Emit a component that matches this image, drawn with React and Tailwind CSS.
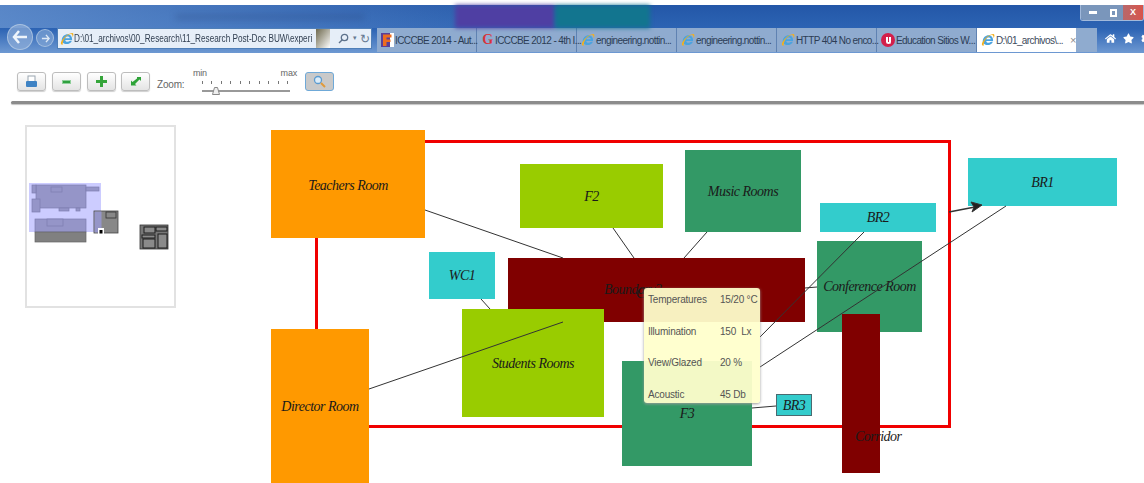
import React from "react";
import { FaHome, FaStar, FaCog } from "react-icons/fa";

const IeIcon = () => (
  <svg width="14" height="14" viewBox="0 0 16 16" className="shrink-0">
    <path d="M2 9.500C2 5 5.500 2.500 8.500 2.500c3.500 0 5.500 2.600 5.300 6.500H6c.2 2.400 3.600 3 5.400.9h2.200c-1.500 4.200-7.500 5-10.200 2.500C2.300 11.500 2 10.600 2 9.500zM6 7h5.200C11 4.400 6.400 4.400 6 7z" fill="#4aa3e0" />
    <path d="M1 13.500C.5 9.500 8 1.500 14 1.200c1.500 0 1.800 2 .6 4.800-.2-2-.7-3.500-2-3.600C8.500 2.300 3 8.500 3 14.500c-.8.200-1.700-.2-2-1z" fill="#f2b01e" />
  </svg>
);

const FavF = () => (
  <svg width="13" height="14" viewBox="0 0 13 14" className="shrink-0">
    <rect width="13" height="14" fill="#fff" />
    <rect width="9" height="14" fill="#5b3f98" />
    <path d="M2 1.500h8.500v3H5.500v2h4v2.500h-4v4H2z" fill="#ee6c1f" />
  </svg>
);

const FavG = () => (
  <span className="w-[13px] shrink-0 text-center font-['Liberation_Serif',serif] text-[14px] leading-none font-bold text-[#d8343c]">
    G
  </span>
);

const FavEdu = () => (
  <span className="flex size-[14px] shrink-0 items-center justify-center rounded-full bg-[#d31f4b]">
    <span className="h-[7px] w-[5px] rounded-b-[3px] border-x-2 border-b-2 border-white" />
  </span>
);

const Tab = ({ icon, label, active, closes }) => (
  <div
    className={
      active
        ? "flex h-full w-[99px] items-center gap-px bg-white pl-[4px] text-[#3c4a5c]"
        : "flex h-full w-[100px] items-center gap-px border-r border-[#5f82b2] pl-[4px] text-[#2c3d55]"
    }
  >
    {icon}
    <span className="whitespace-nowrap">{label}</span>
    {closes && <span className="ml-[6px] text-[11px] text-[#8b8b8b]">×</span>}
  </div>
);

const ToolButton = ({ children }) => (
  <button className="flex h-[19px] w-[29px] items-center justify-center rounded-[3px] border border-[#bdbdbd] bg-gradient-to-b from-white to-[#e4e4e4] shadow-[0_1px_1px_#cfcfcf]">
    {children}
  </button>
);

const Room = ({ className, label }) => (
  <div
    className={
      "absolute flex items-center justify-center text-center font-['Liberation_Serif',serif] text-[14px] tracking-[-0.5px] whitespace-nowrap text-[#1a1a1a] italic " +
      className
    }
  >
    {label}
  </div>
);

// minimap of the whole floor plan, coordinates are page pixels minus the box origin
const Overview = () => (
  <div className="h-[183px] w-[151px] border-2 border-[#e2e2e2] bg-white">
    <svg width="147" height="179" viewBox="27 127 147 179">
      <rect x="29" y="183" width="72" height="49" fill="#ccccff" />
      <g fill="#9595c8" stroke="#7d7db0" strokeWidth="0.7">
        <rect x="36" y="185" width="50" height="23" />
        <rect x="32" y="185" width="4" height="8" />
        <rect x="32" y="199" width="8" height="13" />
        <rect x="86" y="187" width="13" height="4" />
        <rect x="59" y="208" width="10" height="3" />
        <rect x="76" y="208" width="4" height="3" />
        <rect x="51" y="187" width="11" height="5" />
        <rect x="35" y="219" width="51" height="13" />
        <rect x="47" y="219" width="16" height="7" />
      </g>
      <rect x="35" y="232" width="51" height="10" fill="#808080" stroke="#666" strokeWidth="0.7" />
      <rect x="94" y="211" width="24" height="22" fill="#888" stroke="#444" strokeWidth="0.8" />
      <rect x="94.500" y="211.500" width="7" height="21" fill="#9595c8" />
      <rect x="106" y="212" width="10" height="6" fill="#888" stroke="#333" strokeWidth="0.8" />
      <rect x="98" y="228" width="6" height="6" fill="#fff" />
      <rect x="99.500" y="230" width="3" height="3.500" fill="#000" />
      <rect x="140" y="225" width="28" height="24" fill="#777" stroke="#333" strokeWidth="0.8" />
      <g fill="#8a8a8a" stroke="#1c1c1c" strokeWidth="1">
        <rect x="144" y="227" width="11" height="6" />
        <rect x="156" y="227" width="11" height="4" />
        <rect x="142" y="235" width="13" height="3" />
        <rect x="143" y="239" width="12" height="9" />
        <rect x="158" y="234" width="9" height="14" />
      </g>
    </svg>
  </div>
);

export default function App() {
  return (
    <div className="h-[483px] w-[1144px] overflow-hidden bg-white font-['Liberation_Sans',sans-serif]">
      {/* browser frame */}
      <div className="mt-[5px] h-[48px] bg-gradient-to-b from-[#2357a8] via-[#2d64b4] to-[#6e99d2]">
        <div className="flex h-[23px] bg-gradient-to-r from-[#6f9ad4]/70 via-transparent to-transparent">
          <div className="mt-[9px] ml-[175px] h-[6px] w-[190px] rounded-full bg-[#2a4a80]/30 blur-[3px]" />
          <div className="ml-[90px] h-[23px] w-[100px] bg-[#4f3fa3] blur-[2px]" />
          <div className="h-[23px] w-[95px] bg-[#12758f] blur-[2px]" />
          <div className="ml-auto flex h-[16px] w-[64px] items-center overflow-hidden rounded-b-[3px] border border-t-0 border-[#d5e0ee]/70 text-[9px] font-bold text-white">
            <span className="flex h-full w-[23px] items-center justify-center bg-[#7a96bb]">
              <span className="h-[3px] w-[8px] bg-white" />
            </span>
            <span className="flex h-full w-[19px] items-center justify-center bg-[#7a96bb]">
              <span className="h-[8px] w-[7px] border-2 border-white" />
            </span>
            <span className="flex h-full flex-1 items-center justify-center bg-gradient-to-r from-[#b8676a] to-[#d8534a]">
              X
            </span>
          </div>
        </div>
        <div className="flex h-[25px] items-start text-[10px] tracking-[-0.6px]">
          <div className="relative w-[57px] shrink-0">
            <div className="absolute -top-[4px] left-[7px] flex size-[26px] items-center justify-center rounded-full border border-[#c7d7ea]/60 bg-[#8eaed8]/70 text-white">
              <svg width="16" height="14" viewBox="0 0 16 14">
                <path d="M7 1 2 7l5 6M2 7h13" fill="none" stroke="#eef4fb" strokeWidth="2.500" />
              </svg>
            </div>
            <div className="absolute top-[1px] left-[36px] flex size-[18px] items-center justify-center rounded-full border border-[#c7d7ea]/60 bg-[#7fa4d4]/70">
              <svg width="9" height="9" viewBox="0 0 10 10">
                <path d="M5.500 1 9 5l-3.500 4M9 5H1" fill="none" stroke="#dde8f5" strokeWidth="1.500" />
              </svg>
            </div>
          </div>
          <div className="flex h-[21px] w-[315px] shrink-0 items-center border border-[#4f7fb8] bg-[#e6eef8] pl-[2px] text-[#2f3d4f]">
            <IeIcon />
            <span className="w-[239px] origin-left scale-x-[.82] tracking-normal whitespace-nowrap">
              D:\01_archivos\00_Research\11_Research Post-Doc BUW\experi
            </span>
            <span className="ml-[3px] h-[19px] w-[14px] bg-gradient-to-br from-[#6f6a50] to-white" />
            <span className="ml-[8px] flex items-center gap-[4px] text-[#667a92]">
              <svg width="11" height="11" viewBox="0 0 11 11">
                <circle cx="6.500" cy="4.500" r="3.200" fill="none" stroke="#5e728c" strokeWidth="1.300" />
                <path d="M4 7 1 10" stroke="#5e728c" strokeWidth="1.500" />
              </svg>
              <span className="text-[7px]">▾</span>
              <span className="text-[12px] leading-none">↻</span>
            </span>
          </div>
          <div className="ml-[5px] flex h-[24px] w-[720px] shrink-0 bg-[#8fabcf]">
            <Tab icon={<FavF />} label="ICCCBE 2014 - Aut..." />
            <Tab icon={<FavG />} label="ICCCBE 2012 - 4th I..." />
            <Tab icon={<IeIcon />} label="engineering.nottin..." />
            <Tab icon={<IeIcon />} label="engineering.nottin..." />
            <Tab icon={<IeIcon />} label="HTTP 404 No enco..." />
            <Tab icon={<FavEdu />} label="Education Sitios W..." />
            <Tab icon={<IeIcon />} label="D:\01_archivos\..." active closes />
          </div>
          <div className="ml-[8px] flex items-center gap-[7px] pt-[5px] text-[11px] text-white">
            <FaHome />
            <FaStar />
            <FaCog />
          </div>
        </div>
      </div>

      {/* map toolbar */}
      <div className="flex h-[48px] items-start pt-[19px] pl-[17px] text-[9px] tracking-[-0.2px] text-[#666]">
        <ToolButton>
          <svg width="13" height="13" viewBox="0 0 13 13">
            <rect x="3" y="1" width="7" height="6" fill="#fff" stroke="#9aa5b0" />
            <rect x="1" y="6" width="11" height="6" rx="1" fill="#3f83c4" />
          </svg>
        </ToolButton>
        <div className="ml-[6px]">
          <ToolButton>
            <span className="h-[4px] w-[9px] border border-[#8fcf9a] bg-[#2fa13f]" />
          </ToolButton>
        </div>
        <div className="ml-[6px]">
          <ToolButton>
            <svg width="13" height="13" viewBox="0 0 13 13">
              <path d="M5 1h3v4h4v3H8v4H5V8H1V5h4z" fill="#35a53a" />
            </svg>
          </ToolButton>
        </div>
        <div className="ml-[5px]">
          <ToolButton>
            <svg width="12" height="12" viewBox="0 0 12 12">
              <path d="M7 1h4v4L9.500 3.500 5 8l1.500 1.500H1V4.500L2.500 6 7 2.500z" fill="#2ea338" />
            </svg>
          </ToolButton>
        </div>
        <span className="mt-[5px] ml-[7px] w-[36px] shrink-0 text-[10px]">Zoom:</span>
        <div className="-mt-[5px] flex w-[104px] shrink-0 flex-col">
          <div className="flex justify-between">
            <span>min</span>
            <span>max</span>
          </div>
          <div className="flex justify-between px-[9px]">
            {[0, 1, 2, 3, 4, 5, 6, 7, 8, 9].map((i) => (
              <span key={i} className="h-[3px] w-px bg-[#777]" />
            ))}
          </div>
          <div className="relative mx-[9px] mt-[6px] h-[2px] w-[88px] bg-[#999]">
            <svg width="8" height="8" viewBox="0 0 8 8" className="absolute -top-[3px] left-[10px]">
              <path d="M2.500.5h3L7.500 7.500H.5z" fill="#eee" stroke="#888" />
            </svg>
          </div>
        </div>
        <button className="ml-[8px] flex h-[19px] w-[29px] items-center justify-center rounded-[3px] border border-[#6fa9d8] bg-[#c9c9c9]">
          <svg width="13" height="13" viewBox="0 0 13 13">
            <circle cx="5" cy="5" r="3.500" fill="#dcecf8" stroke="#5b9bd0" strokeWidth="1.300" />
            <path d="M8 8l4 4" stroke="#e09a3a" strokeWidth="2" />
          </svg>
        </button>
      </div>
      <div className="ml-[11px] h-[3px] rounded-l-[2px] bg-[#8c8c8c] shadow-[0_1px_1px_#c4c4c4]" />

      <div className="mt-[2px] flex h-[377px]">
        <aside className="w-[260px] shrink-0 pt-[19px] pl-[25px]">
          <Overview />
        </aside>

        {/* floor plan */}
        <div className="relative flex-1">
          <div className="absolute top-[34px] left-[55px] h-[288px] w-[636px] border-[3px] border-[#f00000]" />
          <Room className="top-[24px] left-[11px] h-[108px] w-[154px] bg-[#ff9900] pt-[2px]" label="Teachers Room" />
          <Room className="top-[58px] left-[260px] h-[64px] w-[143px] bg-[#99cc00]" label="F2" />
          <Room className="top-[44px] left-[425px] h-[82px] w-[116px] bg-[#339966]" label="Music Rooms" />
          <Room className="top-[97px] left-[560px] h-[29px] w-[116px] bg-[#33cccc]" label="BR2" />
          <Room className="top-[135px] left-[557px] h-[91px] w-[105px] bg-[#339966]" label="Conference Room" />
          <Room className="top-[52px] left-[708px] h-[48px] w-[149px] bg-[#33cccc]" label="BR1" />
          <Room className="top-[152px] left-[248px] h-[64px] w-[297px] justify-start pb-[2px] pl-[96px] bg-[#800000]" label="Boundary3" />
          <Room className="top-[177px] left-[376px]" label="C" />
          <Room className="top-[146px] left-[169px] h-[47px] w-[66px] bg-[#33cccc]" label="WC1" />
          <Room className="top-[203px] left-[202px] h-[108px] w-[142px] bg-[#99cc00]" label="Students Rooms" />
          <Room className="top-[223px] left-[11px] h-[154px] w-[98px] bg-[#ff9900]" label="Director Room" />
          <Room className="top-[255px] left-[362px] h-[105px] w-[130px] bg-[#339966]" label="F3" />
          <Room className="top-[208px] left-[582px] h-[159px] w-[38px] items-end justify-start pb-[26px] pl-[13px] bg-[#800000]" label="Corridor" />
          <Room className="top-[288px] left-[516px] h-[22px] w-[36px] border border-[#4a6a70] bg-[#33cccc]" label="BR3" />

          <svg className="absolute inset-0 h-full w-full overflow-visible" fill="none" stroke="#333" strokeWidth="1">
            <path d="M165 104 303 152" />
            <path d="M353 122 374 152" />
            <path d="M447 126 424 152" />
            <path d="M221 193 230 203" />
            <path d="M109 283 303 216" />
            <path d="M545 182 557 181" />
            <path d="M604 126 500 231" />
            <path d="M746 100 500 261" />
            <path d="M492 302 516 300" />
            <path d="M689 106 715 101" strokeWidth="1.500" />
            <path d="M722 99 711 96 714 101 712 106z" fill="#222" />
          </svg>

          {/* hover details for the selected room */}
          <div className="absolute top-[182px] left-[384px] grid h-[115px] w-[116px] auto-rows-[31.5px] grid-cols-[72px_1fr] rounded-[3px] bg-[#ffffcc]/94 px-[4px] pt-[4px] text-[10px] tracking-[-0.2px] whitespace-nowrap text-[#555] shadow-[0_1px_3px_#999]">
            <span>Temperatures</span>
            <span>15/20 °C</span>
            <span>Illumination</span>
            <span>150&nbsp; Lx</span>
            <span>View/Glazed</span>
            <span>20 %</span>
            <span>Acoustic</span>
            <span>45 Db</span>
          </div>
        </div>
      </div>
    </div>
  );
}
